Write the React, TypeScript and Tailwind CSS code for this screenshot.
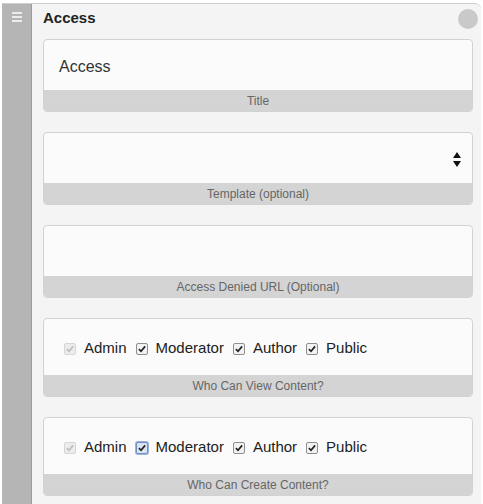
import React from "react";

type Field = { label: string; value?: string; select?: boolean };

const fields: Field[] = [
  { label: "Title", value: "Access" },
  { label: "Template (optional)", select: true },
  { label: "Access Denied URL (Optional)" },
];

const roles = ["Admin", "Moderator", "Author", "Public"];

function Check({ disabled, focused }: { disabled?: boolean; focused?: boolean }) {
  return (
    <span
      className={
        "flex h-[12px] w-[12px] items-center justify-center rounded-[2px] border " +
        (disabled
          ? "border-[#d6d6d6] bg-[#ececec] text-[#bdbdbd]"
          : focused
          ? "border-[#6f8fc4] bg-[#dbe4f3] text-[#222] ring-1 ring-[#9db3da]"
          : "border-[#8f8f8f] bg-[#f2f2f2] text-[#222]")
      }
    >
      <svg width="8" height="8" viewBox="0 0 9 9">
        <path d="M1 4.6 L3.4 7 L8 1.6" fill="none" stroke="currentColor" strokeWidth="1.9" />
      </svg>
    </span>
  );
}

function Card({ label, children, tall }: { label: string; children?: React.ReactNode; tall?: boolean }) {
  return (
    <div className="overflow-hidden rounded-[4px] border border-[#d2d2d2] bg-[#fbfbfb]">
      <div className={"flex items-center " + (tall ? "h-[56px]" : "h-[50px]")}>{children}</div>
      <div className="flex h-[21px] items-center justify-center bg-[#d4d4d4] text-[12px] text-[#666]">
        {label}
      </div>
    </div>
  );
}

function Roles({ focusIndex }: { focusIndex?: number }) {
  return (
    <div className="flex items-center pl-[20px] pt-[3px] text-[15px] text-[#222]">
      {roles.map((r, i) => (
        <div key={r} className="mr-[9px] flex items-center gap-[8px]">
          <Check disabled={i === 0} focused={i === focusIndex} />
          <span>{r}</span>
        </div>
      ))}
    </div>
  );
}

export default function App() {
  return (
    <div className="h-[504px] w-[483px] bg-white pl-[2px] pr-[2px] pt-[3px] font-['Liberation_Sans',Arial,sans-serif]">
      <div className="flex h-full overflow-hidden rounded-tr-[6px] border-t border-[#cfcfcf] bg-[#f4f4f4]">
        <div className="w-[30px] shrink-0 border-r border-[#9c9c9c] bg-[#b5b5b5] pl-[10px] pt-[8px]">
          <div className="flex w-[10px] flex-col gap-[2px]">
            <span className="h-[2px] bg-[#ececec]" />
            <span className="h-[2px] bg-[#ececec]" />
            <span className="h-[2px] bg-[#ececec]" />
          </div>
        </div>
        <div className="flex-1 pl-[11px] pr-[8px]">
          <div className="flex h-[35px] items-center justify-between pb-[6px]">
            <h1 className="text-[15px] font-bold text-[#222]">Access</h1>
            <span className="mr-[-5px] h-[20px] w-[20px] rounded-full bg-[#c9c9c9]" />
          </div>
          <div className="flex flex-col gap-[20px]">
            {fields.map((f) => (
              <Card key={f.label} label={f.label}>
                {f.value && <span className="pl-[15px] pt-[3px] text-[16px] text-[#333]">{f.value}</span>}
                {f.select && (
                  <svg className="ml-auto mr-[11px] mt-[3px]" width="8" height="16" viewBox="0 0 8 16">
                    <path d="M4 0 L8 6 L0 6 Z M0 9 L8 9 L4 15 Z" fill="#111" />
                  </svg>
                )}
              </Card>
            ))}
            <Card label="Who Can View Content?" tall>
              <Roles />
            </Card>
            <Card label="Who Can Create Content?" tall>
              <Roles focusIndex={1} />
            </Card>
          </div>
        </div>
      </div>
    </div>
  );
}
